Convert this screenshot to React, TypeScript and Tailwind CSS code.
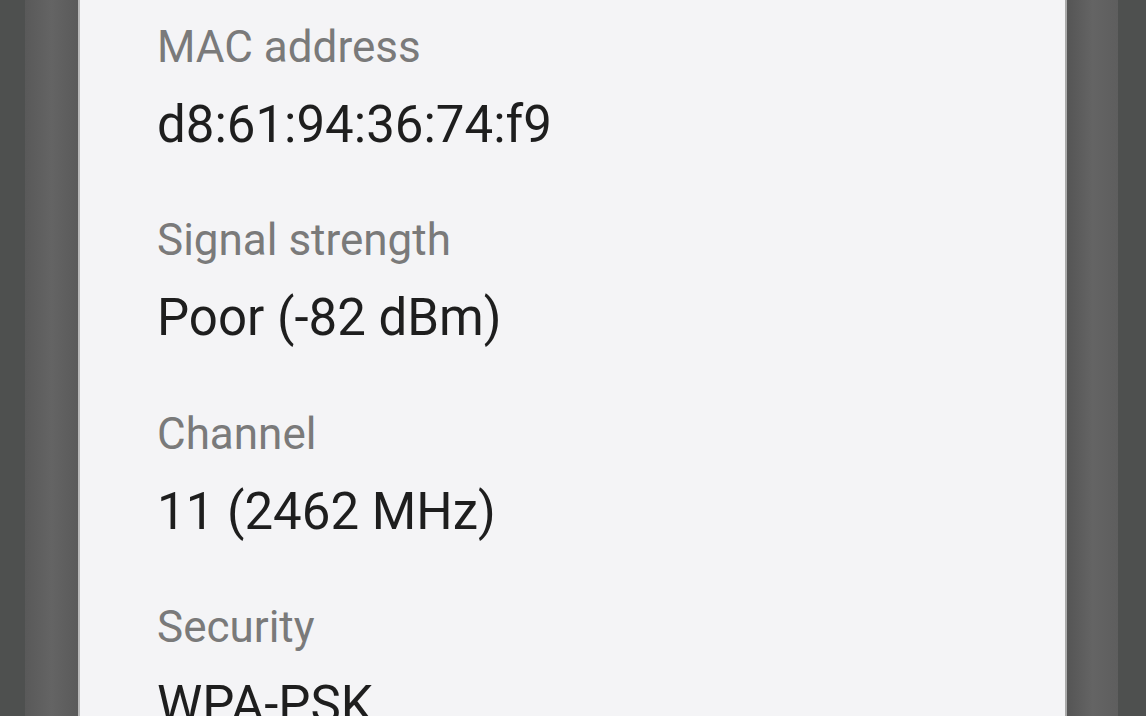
const items = [
  { label: "MAC address", value: "d8:61:94:36:74:f9" },
  { label: "Signal strength", value: "Poor (-82 dBm)" },
  { label: "Channel", value: "11 (2462 MHz)" },
  { label: "Security", value: "WPA-PSK" },
];

export default function App() {
  return (
    <div className="flex h-[716px] w-[1146px] overflow-hidden bg-[#4f5150]">
      {/* left bezel */}
      <div className="w-[25px] shrink-0 bg-[#4e504f]" />
      <div className="w-[53px] shrink-0 bg-gradient-to-r from-[#595959] via-[#646464] to-[#5a5a5a]" />
      <div className="w-[2px] shrink-0 bg-[#b9b9b9]" />

      {/* screen */}
      <div
        className="w-[985px] shrink-0 bg-[#f4f4f6] pl-[77px]"
        style={{ fontFamily: "Roboto, 'Noto Sans', sans-serif" }}
      >
        <div className="flex flex-col pt-[19px]">
          {items.map((it) => (
            <div key={it.label} className="h-[193.3px]">
              <div className="text-[44px] leading-[56px] text-[#7a7a7a]">
                {it.label}
              </div>
              <div className="mt-[22px] text-[51px] leading-[56px] text-[#1e1e1e]">
                {it.value}
              </div>
            </div>
          ))}
        </div>
      </div>

      {/* right bezel */}
      <div className="w-[2px] shrink-0 bg-[#a9a9a9]" />
      <div className="w-[51px] shrink-0 bg-gradient-to-r from-[#555555] via-[#646464] to-[#5e5e5e]" />
      <div className="flex-1 bg-[#4e504f]" />
    </div>
  );
}
